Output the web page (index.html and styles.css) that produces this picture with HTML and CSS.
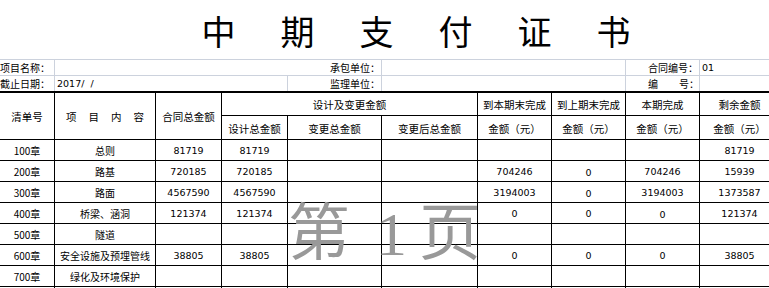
FILE: index.html
```html
<!DOCTYPE html>
<html lang="zh">
<head>
<meta charset="utf-8">
<link rel="stylesheet" href="styles.css">
</head>
<body>
<div class="page">
  <div class="title">
    <span>中</span><span>期</span><span>支</span><span>付</span><span>证</span><span>书</span>
  </div>
  <div class="info">
    <div class="ic lab g">项目名称：</div>
    <div class="ic"></div>
    <div class="ic lab r g">承包单位：</div>
    <div class="ic g"></div>
    <div class="ic lab r g">合同编号：</div>
    <div class="ic num">01</div>

    <div class="ic lab g nb">截止日期：</div>
    <div class="ic num g nb">2017/&nbsp;&nbsp;/</div>
    <div class="ic lab r g nb">监理单位：</div>
    <div class="ic g nb"></div>
    <div class="ic lab g nb bh">编<span class="gap"></span>号：</div>
    <div class="ic nb"></div>
  </div>
  <div class="grid">
    <div class="c h rs2">清单号</div>
    <div class="c h rs2 wide">项目内容</div>
    <div class="c h rs2">合同总金额</div>
    <div class="c h cs3">设计及变更金额</div>
    <div class="c h">到本期末完成</div>
    <div class="c h">到上期末完成</div>
    <div class="c h">本期完成</div>
    <div class="c h">剩余金额</div>
    <div class="c h">设计总金额</div>
    <div class="c h">变更总金额</div>
    <div class="c h">变更后总金额</div>
    <div class="c h">金额（元）</div>
    <div class="c h">金额（元）</div>
    <div class="c h">金额（元）</div>
    <div class="c h">金额（元）</div>

    <div class="c">100章</div><div class="c">总则</div><div class="c n">81719</div><div class="c n">81719</div><div class="c"></div><div class="c"></div><div class="c n"></div><div class="c n"></div><div class="c n"></div><div class="c n">81719</div>
    <div class="c">200章</div><div class="c">路基</div><div class="c n">720185</div><div class="c n">720185</div><div class="c"></div><div class="c"></div><div class="c n">704246</div><div class="c n lo">0</div><div class="c n">704246</div><div class="c n">15939</div>
    <div class="c">300章</div><div class="c">路面</div><div class="c n">4567590</div><div class="c n">4567590</div><div class="c"></div><div class="c"></div><div class="c n">3194003</div><div class="c n lo">0</div><div class="c n">3194003</div><div class="c n">1373587</div>
    <div class="c">400章</div><div class="c">桥梁、涵洞</div><div class="c n">121374</div><div class="c n">121374</div><div class="c"></div><div class="c"></div><div class="c n">0</div><div class="c n">0</div><div class="c n lo">0</div><div class="c n">121374</div>
    <div class="c">500章</div><div class="c">隧道</div><div class="c n"></div><div class="c n"></div><div class="c"></div><div class="c"></div><div class="c n"></div><div class="c n"></div><div class="c n"></div><div class="c n"></div>
    <div class="c">600章</div><div class="c">安全设施及预埋管线</div><div class="c n">38805</div><div class="c n">38805</div><div class="c"></div><div class="c"></div><div class="c n">0</div><div class="c n">0</div><div class="c n">0</div><div class="c n">38805</div>
    <div class="c">700章</div><div class="c">绿化及环境保护</div><div class="c n"></div><div class="c n"></div><div class="c"></div><div class="c"></div><div class="c n"></div><div class="c n"></div><div class="c n"></div><div class="c n"></div>
    <div class="c"></div><div class="c"></div><div class="c"></div><div class="c"></div><div class="c"></div><div class="c"></div><div class="c"></div><div class="c"></div><div class="c"></div><div class="c"></div>
  </div>
  <div class="watermark"><span>第</span><span class="one">1</span><span>页</span></div>
</div>
</body>
</html>
```

FILE: styles.css
```css
html, body {
  margin: 0;
  padding: 0;
  background: #fff;
  overflow: hidden;
}
body {
  width: 769px;
  height: 288px;
  font-family: "Noto Sans CJK SC", sans-serif;
  color: #000;
}
.page {
  position: relative;
  width: 769px;
  height: 288px;
  overflow: hidden;
}
.title {
  height: 59px;
  display: flex;
  padding-left: 179px;
  box-sizing: border-box;
  align-items: center;
  font-size: 34px;
  line-height: 34px;
  font-weight: 400;
  padding-top: 3px;
}
.title span {
  width: 79px;
  text-align: center;
}
.info {
  display: grid;
  grid-template-columns: 55px 233px 94px 244px 74px 80px;
  grid-template-rows: 16px 15px;
  border-top: 1px solid #ccd2dd;
  width: 780px;
}
.ic {
  box-sizing: border-box;
  border-bottom: 1px solid #ccd2dd;
  font-size: 10px;
  line-height: 15px;
  white-space: nowrap;
}
.ic.g { border-right: 1px solid #ccd2dd; }
.ic.nb { border-bottom: none; }
.ic.r { text-align: right; padding-right: 1px; }
.ic.num {
  font-family: "DejaVu Sans", sans-serif;
  font-size: 9.5px;
  padding-left: 2px;
}
.ic.bh { padding-left: 22px; }
.gap { display: inline-block; width: 21px; }
.grid {
  display: grid;
  grid-template-columns: 55px 101px 66px 66px 94px 96px 74px 74px 74px 80px;
  grid-template-rows: 23px 24px repeat(8, 21px);
  border-top: 2px solid #000;
  width: 780px;
}
.c {
  box-sizing: border-box;
  border-right: 1px solid #000;
  border-bottom: 1px solid #000;
  display: flex;
  align-items: center;
  justify-content: center;
  font-size: 10px;
  white-space: nowrap;
}
.c.h { padding-top: 1px; font-size: 10.5px; }
.c.n {
  font-family: "DejaVu Sans", sans-serif;
  font-size: 9.5px;
}
.c.lo { padding-top: 2px; }
.rs2 { grid-row: span 2; }
.cs3 { grid-column: span 3; }
.wide { letter-spacing: 12px; text-indent: 12px; }
.watermark {
  position: absolute;
  left: 288px;
  top: 192px;
  display: flex;
  align-items: baseline;
  color: #999;
  font-size: 62px;
  line-height: 72px;
  pointer-events: none;
}
.watermark .one {
  font-family: "Liberation Serif", serif;
  margin: 0 12px 0 26px;
}
```
